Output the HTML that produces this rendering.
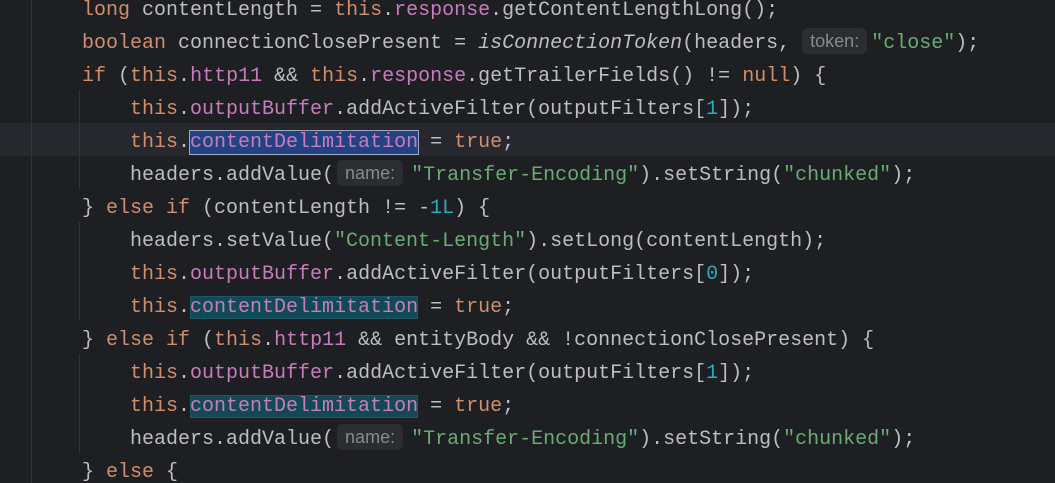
<!DOCTYPE html><html><head><style>
html,body{margin:0;width:1055px;height:483px;overflow:hidden}
body{background:#1e1f22;position:relative;font-family:"Liberation Mono",monospace;font-size:20px;color:#bcbec4}
.l{position:absolute;left:0;height:33px;line-height:33px;white-space:pre;width:1055px}
.k{color:#cf8e6d}.f{color:#c77dbb}.s{color:#6aab73}.n{color:#2aacb8}.i{font-style:italic}
.h{display:inline-block;background:#2b2d30;color:#868a91;font-family:"Liberation Sans",sans-serif;font-size:18px;line-height:26px;height:26px;padding:0 8px;border-radius:6px;vertical-align:1px;margin:0 8px 0 3px}
.sel{background:#214283;outline:1px solid #a0a8c0;outline-offset:0}
.oc{background:#114957;box-shadow:inset 0 0 0 1px #1d5866}
.g{position:absolute;width:1px;background:#313338}
</style></head><body>
<div class="l" style="top:123px;background:#26282e"></div>
<div class="g" style="left:31px;top:0;height:483px"></div>
<div class="g" style="left:79px;top:90px;height:99px"></div>
<div class="g" style="left:79px;top:222px;height:99px"></div>
<div class="g" style="left:79px;top:354px;height:99px"></div>
<div class="l" style="top:-6px;padding-left:82px"><span class="k">long</span> contentLength = <span class="k">this</span>.<span class="f">response</span>.getContentLengthLong();</div>
<div class="l" style="top:27px;padding-left:82px"><span class="k">boolean</span> connectionClosePresent = <span class="i">isConnectionToken</span>(headers, <span class="h" style="margin-left:0;margin-right:4px">token:</span><span class="s">"close"</span>);</div>
<div class="l" style="top:60px;padding-left:82px"><span class="k">if</span> (<span class="k">this</span>.<span class="f">http11</span> &amp;&amp; <span class="k">this</span>.<span class="f">response</span>.getTrailerFields() != <span class="k">null</span>) {</div>
<div class="l" style="top:93px;padding-left:130px"><span class="k">this</span>.<span class="f">outputBuffer</span>.addActiveFilter(outputFilters[<span class="n">1</span>]);</div>
<div class="l" style="top:126px;padding-left:130px"><span class="k">this</span>.<span class="f sel">contentDelimitation</span> = <span class="k">true</span>;</div>
<div class="l" style="top:159px;padding-left:130px">headers.addValue(<span class="h">name:</span><span class="s">"Transfer-Encoding"</span>).setString(<span class="s">"chunked"</span>);</div>
<div class="l" style="top:192px;padding-left:82px">} <span class="k">else if</span> (contentLength != -<span class="n">1L</span>) {</div>
<div class="l" style="top:225px;padding-left:130px">headers.setValue(<span class="s">"Content-Length"</span>).setLong(contentLength);</div>
<div class="l" style="top:258px;padding-left:130px"><span class="k">this</span>.<span class="f">outputBuffer</span>.addActiveFilter(outputFilters[<span class="n">0</span>]);</div>
<div class="l" style="top:291px;padding-left:130px"><span class="k">this</span>.<span class="f oc">contentDelimitation</span> = <span class="k">true</span>;</div>
<div class="l" style="top:324px;padding-left:82px">} <span class="k">else if</span> (<span class="k">this</span>.<span class="f">http11</span> &amp;&amp; entityBody &amp;&amp; !connectionClosePresent) {</div>
<div class="l" style="top:357px;padding-left:130px"><span class="k">this</span>.<span class="f">outputBuffer</span>.addActiveFilter(outputFilters[<span class="n">1</span>]);</div>
<div class="l" style="top:390px;padding-left:130px"><span class="k">this</span>.<span class="f oc">contentDelimitation</span> = <span class="k">true</span>;</div>
<div class="l" style="top:423px;padding-left:130px">headers.addValue(<span class="h">name:</span><span class="s">"Transfer-Encoding"</span>).setString(<span class="s">"chunked"</span>);</div>
<div class="l" style="top:456px;padding-left:82px">} <span class="k">else</span> {</div>
</body></html>
